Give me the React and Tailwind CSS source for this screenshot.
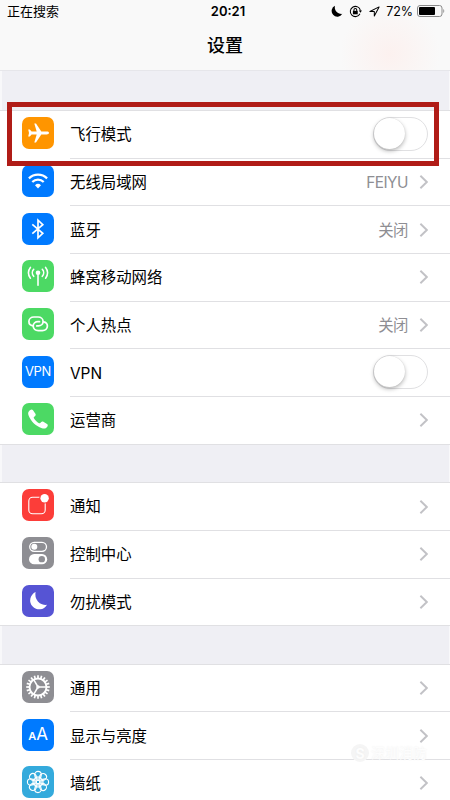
import React from 'react';

const FONT = 'font-["Inter","Noto_Sans_CJK_SC",sans-serif]';

const PlaneIcon = () => (
    <svg viewBox="0 0 32 32" className="w-full h-full" fill="#fff">
        <path d="M27 16c0-.9-1.1-1.4-2.3-1.4h-5.4L14 6.4h-1.7l2.4 8.2H9.6L7.8 12.4H6.2l.8 3.6-.8 3.6h1.6l1.8-2.2h5.1l-2.4 8.2H14l5.3-8.2h5.4c1.2 0 2.3-.5 2.3-1.4z" />
    </svg>
);

const WifiIcon = () => (
    <svg viewBox="0 0 32 32" className="w-full h-full" fill="none" stroke="#fff" strokeWidth="2.2">
        <path d="M6.9 13.4a13 13 0 0 1 18.2 0" />
        <path d="M10.3 17a8.1 8.1 0 0 1 11.4 0" />
        <path d="M16 23.5l-3-3.3a4.3 4.3 0 0 1 6 0z" fill="#fff" stroke="none" />
    </svg>
);

const BluetoothIcon = () => (
    <svg viewBox="0 0 32 32" className="w-full h-full" fill="none" stroke="#fff" strokeWidth="1.7">
        <path d="M10.3 11.3l10.5 9-4.8 4.5V7.2l4.8 4.5-10.5 9" />
    </svg>
);

const CellularIcon = () => (
    <svg viewBox="0 0 32 32" className="w-full h-full" fill="none" stroke="#fff" strokeWidth="1.6" strokeLinecap="round">
        <circle cx="16" cy="12.8" r="2.3" fill="#fff" stroke="none" />
        <path d="M16 14v11.3" />
        <path d="M11.7 9.3a5.2 5.2 0 0 0 0 7M20.3 9.3a5.2 5.2 0 0 1 0 7" />
        <path d="M8.4 7.4a8.4 8.4 0 0 0 0 10.8M23.6 7.4a8.4 8.4 0 0 1 0 10.8" />
    </svg>
);

const HotspotIcon = () => (
    <svg viewBox="0 0 32 32" className="w-full h-full" fill="none" stroke="#fff" strokeWidth="1.7" strokeLinecap="round">
        <path d="M11 17.8c-2.4-.3-4.1-2-4.1-4.3 0-2.6 2.2-4.5 5-4.5h4.2c2.8 0 5 1.9 5 4.5s-2.2 4.4-4.7 4.4h-1.6" />
        <path d="M21.6 13.9c2.2.4 3.8 2.1 3.8 4.2 0 2.6-2.2 4.5-5 4.5h-4.2c-2.8 0-5-1.900-5-4.500s2.200-4.400 4.700-4.400h1.600" />
    </svg>
);

const PhoneIcon = () => (
    <svg viewBox="0 0 32 32" className="w-full h-full" fill="#fff">
        <path d="M8.300 7c1-.8 2-.7 2.700.3l2.400 3.500c.5.8.4 1.500-.3 2.100l-1.100 1c-.4.4-.4.8-.1 1.300 1.300 2 3 3.700 5.100 5 .5.300.9.200 1.300-.2l.9-1c.6-.7 1.400-.8 2.200-.3l3.600 2.400c1 .7 1 1.600.3 2.600-1.300 1.800-3.200 2.300-5.400 1.500C13.500 23 8.900 18.300 6.500 12.300 5.700 10.100 6.300 8.400 8.300 7z" />
    </svg>
);

const NotifyIcon = () => (
    <svg viewBox="0 0 32 32" className="w-full h-full">
        <rect x="6.8" y="8.2" width="16.4" height="16.6" rx="3.8" fill="none" stroke="#fff" strokeWidth="1.1" />
        <circle cx="22.6" cy="9.2" r="5.4" fill="#fc3d39" />
        <circle cx="22.6" cy="9.2" r="4.2" fill="#fff" />
    </svg>
);

const ControlIcon = () => (
    <svg viewBox="0 0 32 32" className="w-full h-full">
        <rect x="7.7" y="5.3" width="16.8" height="9" rx="4.5" fill="none" stroke="#fff" strokeWidth="1.3" />
        <circle cx="12.3" cy="9.8" r="3" fill="#fff" />
        <rect x="7" y="17" width="18.2" height="10.3" rx="5.15" fill="#fff" />
        <circle cx="19.8" cy="22.15" r="3.2" fill="#8e8e93" />
    </svg>
);

const MoonIcon = () => (
    <svg viewBox="0 0 32 32" className="w-full h-full" fill="#fff">
        <path d="M13.6 7.1a10.3 10.3 0 0 0 11.4 12.7A9 9 0 1 1 13.6 7.1z" />
    </svg>
);

const GearIcon = () => (
    <svg viewBox="0 0 32 32" className="w-full h-full" fill="none" stroke="#fff">
        {Array.from({ length: 20 }, (_, i) => (
            <path key={i} d="M16 7.3V4.2" strokeWidth="1.7" transform={`rotate(${i * 18} 16 16)`} />
        ))}
        <circle cx="16" cy="16" r="8.5" strokeWidth="1.9" />
        <circle cx="16" cy="16" r="1.8" fill="#fff" stroke="none" />
        <path d="M16 16h8M16 16l-4-6.9M16 16l-4 6.9" strokeWidth="1.5" />
    </svg>
);

const FlowerIcon = () => (
    <svg viewBox="0 0 32 32" className="w-full h-full" fill="none" stroke="#fff" strokeWidth="1.1">
        {Array.from({ length: 8 }, (_, i) => (
            <g key={i} transform={`rotate(${i * 45} 16 16)`}>
                <circle cx="16" cy="8.7" r="3.3" />
                <circle cx="16" cy="12.6" r="1.9" strokeWidth=".9" />
            </g>
        ))}
        <circle cx="16" cy="16" r="1.8" />
    </svg>
);

const groups = [
    [
        { label: '飞行模式', color: 'bg-[#ff9500]', icon: <PlaneIcon />, toggle: true },
        { label: '无线局域网', color: 'bg-[#007aff]', icon: <WifiIcon />, value: 'FEIYU' },
        { label: '蓝牙', color: 'bg-[#007aff]', icon: <BluetoothIcon />, value: '关闭' },
        { label: '蜂窝移动网络', color: 'bg-[#4cd964]', icon: <CellularIcon /> },
        { label: '个人热点', color: 'bg-[#4cd964]', icon: <HotspotIcon />, value: '关闭' },
        { label: 'VPN', color: 'bg-[#007aff]', icon: <span className="text-[13px] tracking-[-0.3px]">VPN</span>, toggle: true },
        { label: '运营商', color: 'bg-[#4cd964]', icon: <PhoneIcon /> },
    ],
    [
        { label: '通知', color: 'bg-[#fc3d39]', icon: <NotifyIcon /> },
        { label: '控制中心', color: 'bg-[#8e8e93]', icon: <ControlIcon /> },
        { label: '勿扰模式', color: 'bg-[#5654d4]', icon: <MoonIcon /> },
    ],
    [
        { label: '通用', color: 'bg-[#8e8e93]', icon: <GearIcon /> },
        {
            label: '显示与亮度',
            color: 'bg-[#007aff]',
            icon: (
                <span className="flex items-baseline leading-none">
                    <span className="text-[11px] font-semibold">A</span>
                    <span className="text-[17px]">A</span>
                </span>
            ),
        },
        { label: '墙纸', color: 'bg-[#34aadc]', icon: <FlowerIcon /> },
    ],
];

const Chevron = () => (
    <svg viewBox="0 0 9 14" className="w-[9px] h-[14px] -mt-px" fill="none" stroke="#c2c2c6" strokeWidth="1.9">
        <path d="M1.4 .8l6.400 6.200L1.400 13.200" />
    </svg>
);

const Toggle = () => (
    <div className="w-[55px] h-[34px] -mt-[2px] rounded-full border-[1.5px] border-[#e0e0e2] bg-white">
        <div className="w-[31px] h-[31px] rounded-full bg-white shadow-[0_2px_4px_rgba(0,0,0,0.28),0_0_1px_rgba(0,0,0,0.15)]"></div>
    </div>
);

const Row = ({ item, last }) => (
    <div className={`flex h-[47.7px] pl-[22px] ${last ? 'border-b border-[#e0e0e3]' : ''}`}>
        <div className={`mt-[6.2px] w-8 h-8 rounded-[7px] shrink-0 flex items-center justify-center text-white ${item.color}`}>
            {item.icon}
        </div>
        <div className={`ml-4 flex-1 flex items-center pr-[22px] pt-px ${last ? '' : 'border-b border-[#e0e0e3]'}`}>
            <span className="flex-1 text-[15.4px] text-black">{item.label}</span>
            {item.toggle ? (
                <Toggle />
            ) : (
                <div className="flex items-center gap-[11px]">
                    {item.value && <span className="text-[15.4px] tracking-[-0.5px] text-[#8e8e93]">{item.value}</span>}
                    <Chevron />
                </div>
            )}
        </div>
    </div>
);

const StatusBar = () => (
    <div className="relative flex h-6 items-center justify-between pl-[7px] pr-[5px] text-[13px] text-black">
        <span>正在搜索</span>
        <span className="absolute left-0 right-0 pl-[6px] text-center font-semibold">20:21</span>
        <div className="flex items-center">
            <svg viewBox="0 0 12 12" className="w-[12px] h-[12px] mr-[6px] -mt-[2px]">
                <path d="M4 .8a6.5 6.5 0 0 0 7.3 8A5.7 5.7 0 1 1 4 .8z" />
            </svg>
            <svg viewBox="0 0 14 14" className="w-[13px] h-[13px] mr-[7px] -mt-[2px]" fill="none" stroke="#000" strokeWidth="1.1">
                <path d="M11.8 9.5A5.5 5.5 0 1 1 12.3 6" />
                <path d="M10.5 6h3.5l-1.7 2.4z" fill="#000" stroke="none" />
                <rect x="4.2" y="6.3" width="5.2" height="3.7" fill="#000" stroke="none" />
                <path d="M5.3 6.5V5.3a1.5 1.5 0 0 1 3 0v1.2" />
            </svg>
            <svg viewBox="0 0 12 12" className="w-[11px] h-[11px] mr-[6px] -mt-[2px]" fill="none" stroke="#000" strokeWidth="1.1" strokeLinejoin="round">
                <path d="M11 1L1 6h4.8v5z" />
            </svg>
            <span className="mr-[4px] text-[12.5px] tracking-[-0.1px]">72%</span>
            <svg viewBox="0 0 28 12" className="w-[28px] h-[12px] -mt-[2px]">
                <rect x=".5" y=".5" width="24.5" height="11" rx="2.5" fill="none" stroke="#8a8a8a" />
                <rect x="2" y="2" width="16" height="8" rx="1" fill="#000" />
                <path d="M26.3 4v4c1.3-.5 1.3-3.5 0-4z" fill="#8a8a8a" />
            </svg>
        </div>
    </div>
);

export default function App() {
    return (
        <div className={`relative w-[450px] h-[800px] overflow-hidden bg-[#efeff4] shadow-[inset_2px_0_#f8f8fa,inset_-1px_0_#f8f8fa] ${FONT}`}>
            {/* Header */}
            <div className="h-[71px] border-b border-[#e6e6ea] bg-[#f9f9f9] bg-[radial-gradient(circle_at_390px_54px,#fcf1ef_0,#f9f9f9_50px)]">
                <StatusBar />
                <h1 className="pt-[8px] text-center text-[18px] leading-7 font-medium text-black">设置</h1>
            </div>

            {/* Settings groups */}
            <div className="mt-[39px] flex flex-col gap-[37.4px]">
                {groups.map((items, g) => (
                    <div key={g} className="border-t border-[#e0e0e3] bg-white">
                        {items.map((item, i) => (
                            <Row key={item.label} item={item} last={i === items.length - 1} />
                        ))}
                    </div>
                ))}
            </div>

            {/* Highlight frame */}
            <div className="absolute left-[7px] top-[102px] w-[432px] h-[64px] border-[5px] border-[#b01c17]"></div>

            {/* Watermark */}
            <div className="absolute left-[351px] top-[743px] flex items-center gap-[2px] text-[#fdfdfd] [text-shadow:0_0_2px_#ececec]">
                <span className="flex h-[18px] w-[18px] items-center justify-center rounded-full bg-[#f5f5f5] text-[14px] font-bold">S</span>
                <span className="text-[14px] leading-5">深圳消防</span>
            </div>
        </div>
    );
}
